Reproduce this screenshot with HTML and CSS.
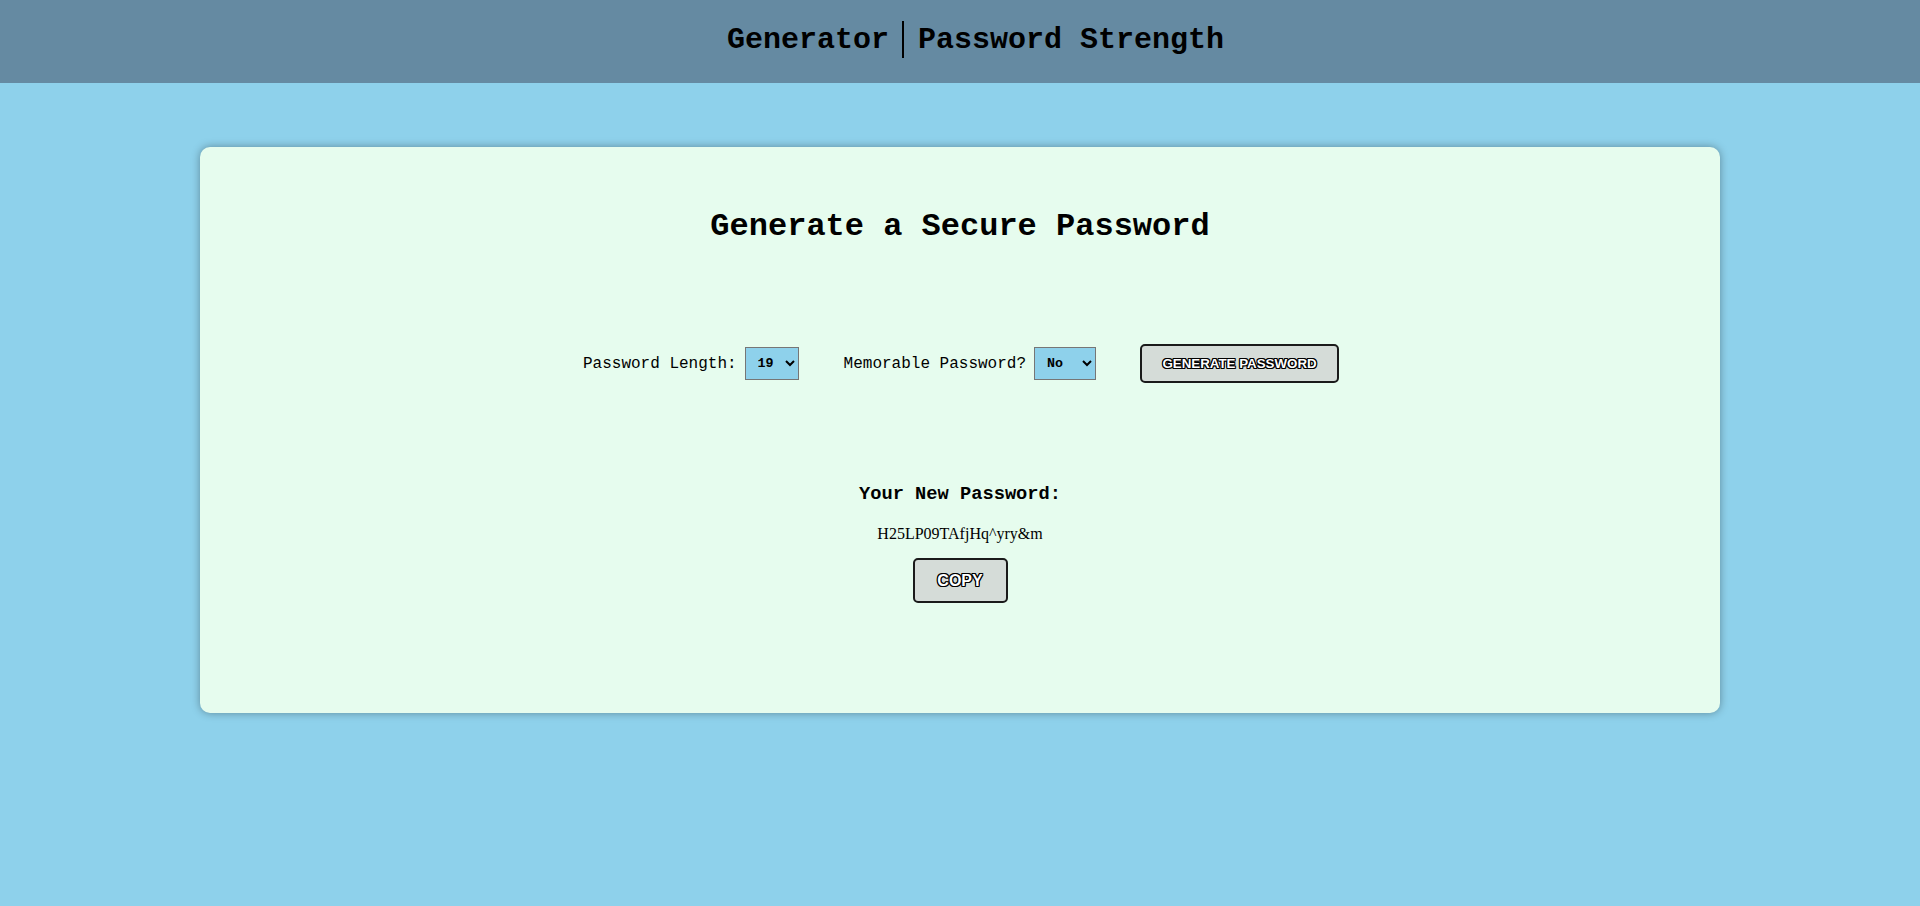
FILE: index.html
```html
<!DOCTYPE html>
<html lang="en">
<head>
<meta charset="utf-8">
<title>Password Generator</title>
<link rel="stylesheet" href="styles.css">
</head>
<body>
<header class="topbar">
  <nav class="nav">
    <a class="nav-link" href="#">Generator</a>
    <span class="nav-divider"></span>
    <a class="nav-link" href="#">Password Strength</a>
  </nav>
</header>
<main class="card">
  <h1 class="card-title">Generate a Secure Password</h1>
  <div class="controls">
    <label class="ctrl-label" for="len">Password Length:</label>
    <select id="len" class="select select-len">
      <option>19</option>
    </select>
    <label class="ctrl-label ctrl-label-gap" for="mem">Memorable Password?</label>
    <select id="mem" class="select select-mem">
      <option>No</option>
      <option>Yes</option>
    </select>
    <button class="btn btn-generate" type="button">GENERATE PASSWORD</button>
  </div>
  <h3 class="result-title">Your New Password:</h3>
  <p class="result-value">H25LP09TAfjHq^yry&amp;m</p>
  <button class="btn btn-copy" type="button">COPY</button>
</main>
</body>
</html>
```
FILE: styles.css
```css
html, body {
  margin: 0;
  padding: 0;
}
body {
  background: #8ed1eb;
  font-family: "Liberation Mono", "Courier New", monospace;
  color: #000;
  min-height: 906px;
}
.topbar {
  height: 83px;
  box-sizing: border-box;
  padding-bottom: 4px;
  background: #658aa2;
  display: flex;
  align-items: center;
  justify-content: center;
}
.nav {
  display: flex;
  align-items: center;
  padding-left: 31px;
}
.nav-link {
  font-family: "Liberation Mono", "Courier New", monospace;
  font-weight: bold;
  font-size: 30px;
  color: #000;
  text-decoration: none;
  line-height: normal;
}
.nav-divider {
  width: 2px;
  height: 37px;
  background: #000;
  margin: 0 14px 0 13px;
}
.card {
  margin: 64px 200px 0;
  height: 566px;
  box-sizing: border-box;
  padding-top: 61px;
  background: #e6fcee;
  border-radius: 10px;
  box-shadow: 0 0 8px rgba(0, 0, 0, 0.35);
  display: flex;
  flex-direction: column;
  align-items: center;
}
.card-title {
  margin: 0;
  font-size: 32px;
  font-weight: bold;
  line-height: normal;
}
.controls {
  margin-top: 99px;
  height: 39px;
  display: flex;
  align-items: center;
  justify-content: center;
  padding-left: 2px;
}
.ctrl-label {
  font-size: 16px;
  margin-right: 8px;
}
.ctrl-label-gap {
  margin-left: 45px;
}
.select {
  height: 33px;
  box-sizing: border-box;
  background: #8ed1eb;
  border: 1px solid #767676;
  border-radius: 0;
  font-family: "Liberation Mono", "Courier New", monospace;
  font-size: 13.33px;
  font-weight: bold;
  color: #000;
  padding: 0 4px 0 8px;
}
.select-len {
  width: 54px;
}
.select-mem {
  width: 62px;
}
.btn {
  background: #d5dcd8;
  border: 2px solid #1a1a1a;
  border-radius: 5px;
  font-family: "Liberation Sans", Arial, sans-serif;
  font-weight: bold;
  color: #fff;
  text-shadow: 1px 0 0 #000, -1px 0 0 #000, 0 1px 0 #000, 0 -1px 0 #000,
    1px 1px 0 #000, -1px -1px 0 #000, 1px -1px 0 #000, -1px 1px 0 #000;
  padding: 0;
  cursor: pointer;
}
.btn-generate {
  margin-left: 44px;
  width: 199px;
  height: 39px;
  font-size: 13.33px;
}
.result-title {
  margin: 100px 0 0;
  font-size: 18.72px;
  font-weight: bold;
  line-height: normal;
}
.result-value {
  margin: 20px 0 0;
  font-family: "Liberation Serif", "Times New Roman", serif;
  font-size: 16px;
  line-height: normal;
}
.btn-copy {
  margin-top: 15px;
  width: 95px;
  height: 45px;
  font-size: 16px;
}
```
